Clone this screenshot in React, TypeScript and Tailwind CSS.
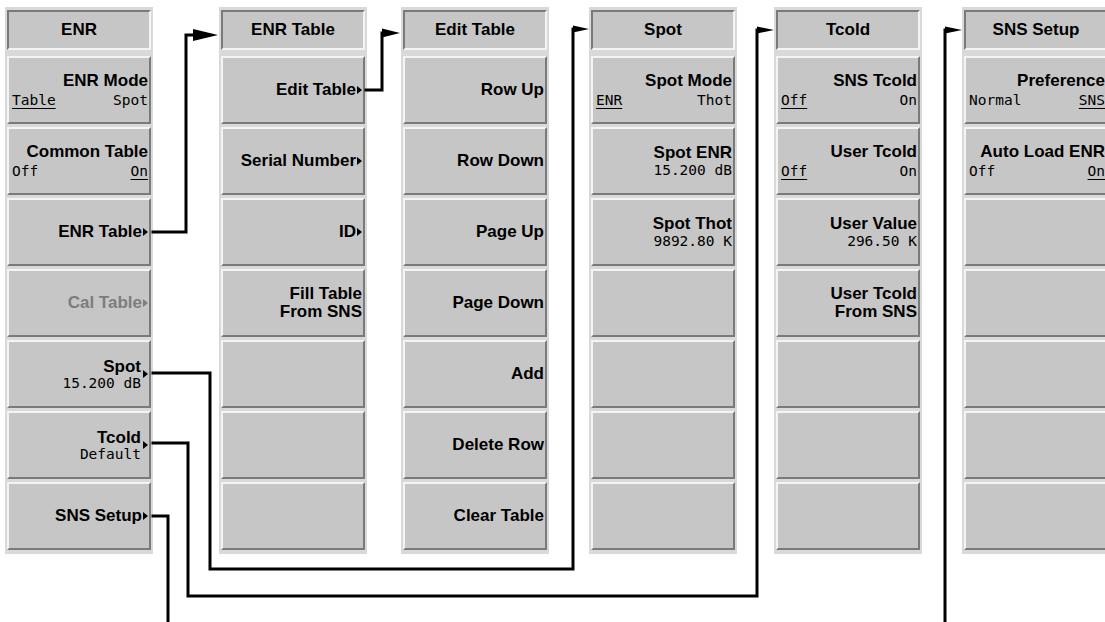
import React from "react";

type Key = {
  title?: string[];
  value?: string;
  opts?: [string, string, 0 | 1];
  more?: boolean;
  moreSide?: boolean;
  dim?: boolean;
};

type Panel = { name: string; ml: string; keys: Key[] };

const panels: Panel[] = [
  {
    name: "ENR",
    ml: "ml-[5px]",
    keys: [
      { title: ["ENR Mode"], opts: ["Table", "Spot", 0] },
      { title: ["Common Table"], opts: ["Off", "On", 1] },
      { title: ["ENR Table"], more: true },
      { title: ["Cal Table"], more: true, dim: true },
      { title: ["Spot"], value: "15.200 dB", moreSide: true },
      { title: ["Tcold"], value: "Default", moreSide: true },
      { title: ["SNS Setup"], more: true },
    ],
  },
  {
    name: "ENR Table",
    ml: "ml-[66px]",
    keys: [
      { title: ["Edit Table"], more: true },
      { title: ["Serial Number"], more: true },
      { title: ["ID"], more: true },
      { title: ["Fill Table", "From SNS"] },
      {},
      {},
      {},
    ],
  },
  {
    name: "Edit Table",
    ml: "ml-[34px]",
    keys: [
      { title: ["Row Up"] },
      { title: ["Row Down"] },
      { title: ["Page Up"] },
      { title: ["Page Down"] },
      { title: ["Add"] },
      { title: ["Delete Row"] },
      { title: ["Clear Table"] },
    ],
  },
  {
    name: "Spot",
    ml: "ml-[40px]",
    keys: [
      { title: ["Spot Mode"], opts: ["ENR", "Thot", 0] },
      { title: ["Spot ENR"], value: "15.200 dB" },
      { title: ["Spot Thot"], value: "9892.80 K" },
      {},
      {},
      {},
      {},
    ],
  },
  {
    name: "Tcold",
    ml: "ml-[37px]",
    keys: [
      { title: ["SNS Tcold"], opts: ["Off", "On", 0] },
      { title: ["User Tcold"], opts: ["Off", "On", 0] },
      { title: ["User Value"], value: "296.50 K" },
      { title: ["User Tcold", "From SNS"] },
      {},
      {},
      {},
    ],
  },
  {
    name: "SNS Setup",
    ml: "ml-[40px]",
    keys: [
      { title: ["Preference"], opts: ["Normal", "SNS", 1] },
      { title: ["Auto Load ENR"], opts: ["Off", "On", 1] },
      {},
      {},
      {},
      {},
      {},
    ],
  },
];

function Tri({ color = "#000" }: { color?: string }) {
  return (
    <svg width="5" height="8" viewBox="0 0 5 8" className="shrink-0">
      <path d="M0 0 L5 4 L0 8 Z" fill={color} />
    </svg>
  );
}

function SoftKey({ k }: { k: Key }) {
  const mono = "font-['DejaVu_Sans_Mono',monospace] text-[14.5px] leading-[15px] font-normal";
  return (
    <div className="flex h-[68px] shrink-0 flex-col items-end justify-center border-2 border-t-[#f4f4f4] border-l-[#f4f4f4] border-b-[#7a7a7a] border-r-[#7a7a7a] bg-[#c6c6c6] pr-px">
      {k.title && k.moreSide ? (
        <div className="flex items-center gap-[2px]">
          <div className="flex flex-col items-end">
            <div className="text-[17px] font-bold leading-[18px] text-black">{k.title[0]}</div>
            <div className={`${mono} text-black`}>{k.value}</div>
          </div>
          <Tri />
        </div>
      ) : k.title ? (
        <>
          {k.title.map((t) => (
            <div
              key={t}
              className={`flex items-center gap-[1px] text-[17px] font-bold leading-[18px] ${k.dim ? "text-[#7d7d7d]" : "text-black"}`}
            >
              <span>{t}</span>
              {k.more ? <Tri color={k.dim ? "#7d7d7d" : "#000"} /> : null}
            </div>
          ))}
          {k.value ? <div className={`${mono} mt-px text-black`}>{k.value}</div> : null}
          {k.opts ? (
            <div className={`${mono} mt-[3px] flex w-full justify-between pl-[3px] text-black`}>
              <span className={k.opts[2] === 0 ? "underline decoration-1 underline-offset-[3px]" : ""}>{k.opts[0]}</span>
              <span className={k.opts[2] === 1 ? "underline decoration-1 underline-offset-[3px]" : ""}>{k.opts[1]}</span>
            </div>
          ) : null}
        </>
      ) : null}
    </div>
  );
}

function MenuPanel({ p }: { p: Panel }) {
  return (
    <div className={`${p.ml} flex w-[148px] shrink-0 flex-col bg-[#d9d9d9] px-[2px] pt-[3px] pb-[4px]`}>
      <div className="flex h-[40px] items-center justify-center border-2 border-t-[#7a7a7a] border-l-[#7a7a7a] border-b-[#f4f4f4] border-r-[#f4f4f4] bg-[#c6c6c6] text-[17px] font-bold text-black">
        {p.name}
      </div>
      <div className="mt-[6px] flex flex-col gap-[3px]">
        {p.keys.map((k, i) => (
          <SoftKey key={i} k={k} />
        ))}
      </div>
    </div>
  );
}

const wires = [
  "M153 232 H186 V35 H194",
  "M366 90 H382 V33",
  "M153 373 H210 V569 H573 V29",
  "M153 443 H188 V596 H757 V30",
  "M153 516 H168 V622",
  "M945 622 V30",
];

const heads: [number, number, number, number][] = [
  [193, 218, 35, 6],
  [382, 400, 33, 4.5],
  [573, 589, 29, 3.5],
  [757, 774, 30, 3.5],
  [945, 962, 30, 3.5],
];

export default function App() {
  return (
    <div className="relative h-[622px] w-[1105px] overflow-hidden bg-white font-['Liberation_Sans',Arial,sans-serif]">
      <div className="flex items-start pt-[7px]">
        {panels.map((p) => (
          <MenuPanel key={p.name} p={p} />
        ))}
      </div>
      <svg className="pointer-events-none absolute inset-0" width="1105" height="622">
        {wires.map((d, i) => (
          <path key={i} d={d} fill="none" stroke="#000" strokeWidth="3" strokeLinecap="square" />
        ))}
        {heads.map(([x0, tip, y, h], i) => (
          <polygon key={i} points={`${x0},${y - h} ${tip},${y} ${x0},${y + h}`} fill="#000" />
        ))}
      </svg>
    </div>
  );
}
